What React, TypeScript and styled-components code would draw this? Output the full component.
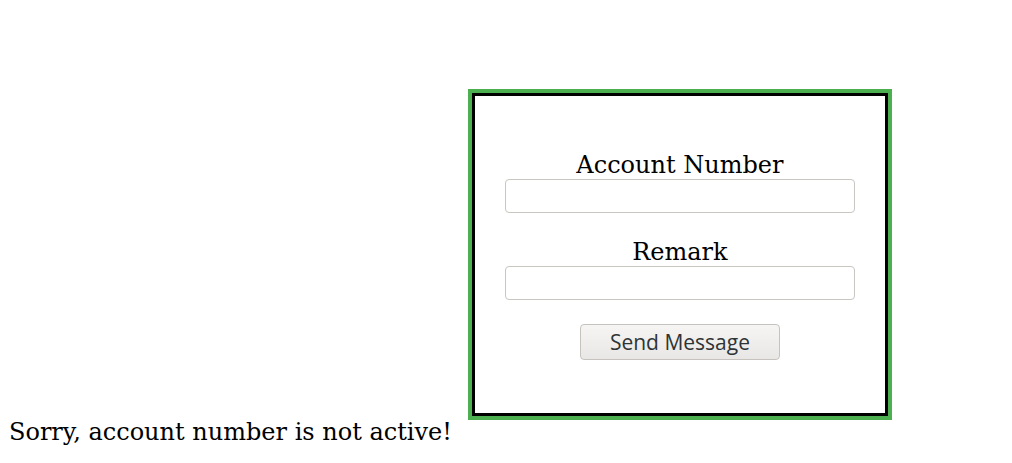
import React from "react";
import styled, { createGlobalStyle } from "styled-components";

const GlobalStyle = createGlobalStyle`
  html, body {
    margin: 0;
    padding: 0;
    background: #ffffff;
  }
  body {
    margin: 8px;
    font-family: "DejaVu Serif", serif;
    font-size: 24px;
    color: #000000;
  }
`;

const Page = styled.div`
  display: flex;
  align-items: flex-end;
  padding-top: 81px;
`;

const Message = styled.div`
  font-family: "DejaVu Serif", serif;
  font-size: 24px;
  line-height: 28px;
  white-space: nowrap;
  padding-left: 1px;
  margin-bottom: 1px;
`;

const Card = styled.form`
  box-sizing: border-box;
  width: 424px;
  height: 331px;
  margin-left: 16px;
  margin-bottom: 27px;
  border: 4px solid #4caf50;
  display: flex;
`;

const Inner = styled.div`
  flex: 1;
  border: 3px solid #000000;
  display: flex;
  flex-direction: column;
  align-items: center;
  padding-top: 55px;
`;

const Field = styled.div<{ $gap?: number }>`
  display: flex;
  flex-direction: column;
  align-items: center;
  margin-bottom: ${(p) => p.$gap ?? 0}px;
`;

const Label = styled.label`
  font-family: "DejaVu Serif", serif;
  font-size: 24px;
  line-height: 28px;
  color: #000000;
`;

const Input = styled.input`
  box-sizing: border-box;
  width: 350px;
  height: 34px;
  border: 1px solid #c9c6c2;
  border-radius: 4px;
  background: #ffffff;
  padding: 0 8px;
  outline: none;
`;

const Button = styled.button`
  box-sizing: border-box;
  width: 200px;
  height: 36px;
  border: 1px solid #c6c3bf;
  border-radius: 4px;
  background: linear-gradient(#f6f5f4, #e9e7e5);
  font-family: "Open Sans", "DejaVu Sans", sans-serif;
  font-size: 21px;
  color: #2e3436;
  padding: 0;
  cursor: pointer;
`;

export default function App() {
  return (
    <>
      <GlobalStyle />
      <Page>
        <Message>Sorry, account number is not active!</Message>
        <Card onSubmit={(e) => e.preventDefault()}>
          <Inner>
            <Field $gap={25}>
              <Label>Account Number</Label>
              <Input type="text" />
            </Field>
            <Field $gap={24}>
              <Label>Remark</Label>
              <Input type="text" />
            </Field>
            <Button type="submit">Send Message</Button>
          </Inner>
        </Card>
      </Page>
    </>
  );
}
